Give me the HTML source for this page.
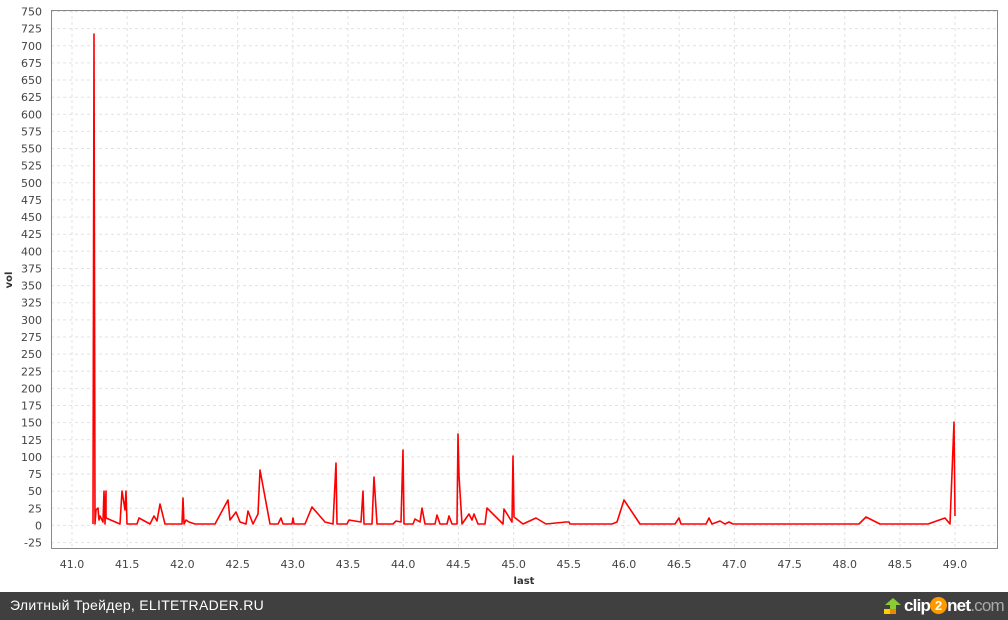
<!DOCTYPE html>
<html><head><meta charset="utf-8"><style>
html,body{margin:0;padding:0;width:1008px;height:620px;overflow:hidden;background:#fff;font-family:"Liberation Sans","DejaVu Sans",sans-serif}
#foot{position:absolute;left:0;top:592px;width:1008px;height:28px;background:#404040;color:#fff;font-size:14px}
</style></head><body>
<svg width="1008" height="592" style="position:absolute;left:0;top:0" font-family="DejaVu Sans, Liberation Sans, sans-serif" font-size="11" fill="#444">
<g stroke="#e2e2e2" stroke-dasharray="3,3" stroke-width="1">
<line x1="51" x2="998" y1="11.5" y2="11.5"/><line x1="51" x2="998" y1="28.6" y2="28.6"/><line x1="51" x2="998" y1="45.8" y2="45.8"/><line x1="51" x2="998" y1="62.9" y2="62.9"/><line x1="51" x2="998" y1="80.0" y2="80.0"/><line x1="51" x2="998" y1="97.2" y2="97.2"/><line x1="51" x2="998" y1="114.3" y2="114.3"/><line x1="51" x2="998" y1="131.4" y2="131.4"/><line x1="51" x2="998" y1="148.5" y2="148.5"/><line x1="51" x2="998" y1="165.7" y2="165.7"/><line x1="51" x2="998" y1="182.8" y2="182.8"/><line x1="51" x2="998" y1="199.9" y2="199.9"/><line x1="51" x2="998" y1="217.1" y2="217.1"/><line x1="51" x2="998" y1="234.2" y2="234.2"/><line x1="51" x2="998" y1="251.3" y2="251.3"/><line x1="51" x2="998" y1="268.5" y2="268.5"/><line x1="51" x2="998" y1="285.6" y2="285.6"/><line x1="51" x2="998" y1="302.7" y2="302.7"/><line x1="51" x2="998" y1="319.9" y2="319.9"/><line x1="51" x2="998" y1="337.0" y2="337.0"/><line x1="51" x2="998" y1="354.1" y2="354.1"/><line x1="51" x2="998" y1="371.3" y2="371.3"/><line x1="51" x2="998" y1="388.4" y2="388.4"/><line x1="51" x2="998" y1="405.5" y2="405.5"/><line x1="51" x2="998" y1="422.6" y2="422.6"/><line x1="51" x2="998" y1="439.8" y2="439.8"/><line x1="51" x2="998" y1="456.9" y2="456.9"/><line x1="51" x2="998" y1="474.0" y2="474.0"/><line x1="51" x2="998" y1="491.2" y2="491.2"/><line x1="51" x2="998" y1="508.3" y2="508.3"/><line x1="51" x2="998" y1="525.4" y2="525.4"/><line x1="51" x2="998" y1="542.6" y2="542.6"/>
<line y1="10" y2="549" x1="72" x2="72"/><line y1="10" y2="549" x1="127.2" x2="127.2"/><line y1="10" y2="549" x1="182.4" x2="182.4"/><line y1="10" y2="549" x1="237.6" x2="237.6"/><line y1="10" y2="549" x1="292.8" x2="292.8"/><line y1="10" y2="549" x1="348" x2="348"/><line y1="10" y2="549" x1="403.2" x2="403.2"/><line y1="10" y2="549" x1="458.4" x2="458.4"/><line y1="10" y2="549" x1="513.6" x2="513.6"/><line y1="10" y2="549" x1="568.8" x2="568.8"/><line y1="10" y2="549" x1="624" x2="624"/><line y1="10" y2="549" x1="679.2" x2="679.2"/><line y1="10" y2="549" x1="734.4" x2="734.4"/><line y1="10" y2="549" x1="789.6" x2="789.6"/><line y1="10" y2="549" x1="844.8" x2="844.8"/><line y1="10" y2="549" x1="900" x2="900"/><line y1="10" y2="549" x1="955" x2="955"/>
</g>
<rect x="51.5" y="10.5" width="946" height="538" fill="none" stroke="#888"/>
<g text-anchor="end">
<text x="42" y="15.5">750</text><text x="42" y="32.6">725</text><text x="42" y="49.8">700</text><text x="42" y="66.9">675</text><text x="42" y="84">650</text><text x="42" y="101.2">625</text><text x="42" y="118.3">600</text><text x="42" y="135.4">575</text><text x="42" y="152.5">550</text><text x="42" y="169.7">525</text><text x="42" y="186.8">500</text><text x="42" y="203.9">475</text><text x="42" y="221.1">450</text><text x="42" y="238.2">425</text><text x="42" y="255.3">400</text><text x="42" y="272.5">375</text><text x="42" y="289.6">350</text><text x="42" y="306.7">325</text><text x="42" y="323.9">300</text><text x="42" y="341">275</text><text x="42" y="358.1">250</text><text x="42" y="375.3">225</text><text x="42" y="392.4">200</text><text x="42" y="409.5">175</text><text x="42" y="426.6">150</text><text x="42" y="443.8">125</text><text x="42" y="460.9">100</text><text x="42" y="478">75</text><text x="42" y="495.2">50</text><text x="42" y="512.3">25</text><text x="42" y="529.4">0</text><text x="42" y="546.6">-25</text>
</g>
<g text-anchor="middle">
<text x="72" y="568">41.0</text><text x="127.2" y="568">41.5</text><text x="182.4" y="568">42.0</text><text x="237.6" y="568">42.5</text><text x="292.8" y="568">43.0</text><text x="348" y="568">43.5</text><text x="403.2" y="568">44.0</text><text x="458.4" y="568">44.5</text><text x="513.6" y="568">45.0</text><text x="568.8" y="568">45.5</text><text x="624" y="568">46.0</text><text x="679.2" y="568">46.5</text><text x="734.4" y="568">47.0</text><text x="789.6" y="568">47.5</text><text x="844.8" y="568">48.0</text><text x="900" y="568">48.5</text><text x="955" y="568">49.0</text>
<text x="524" y="584" font-weight="bold" font-size="10" fill="#333">last</text>
</g>
<text transform="translate(12,280) rotate(-90)" text-anchor="middle" font-weight="bold" font-size="10" fill="#333">vol</text>
<polyline fill="none" stroke="#f00" stroke-width="1.6" stroke-linejoin="round" points="93,524 94,34 95,524 96,510 98,508 99,520 100,516 103,522 104,491 105,524 106,491 106,518 120,524 122,491 125,510 126,491 127,524 137,524 139,518 150,524 154,516 157,521 160,504 165,524 182,524 183,498 184,524 186,520 189,522 195,524 215,524 228,500 230,520 236,512 240,522 246,524 248,511 253,524 258,514 260,470 270,524 278,524 281,518 283,524 292,524 293,518 294,524 305,524 312,507 325,522 333,524 336,463 337,524 347,524 349,520 361,522 363,491 364,524 372,524 374,477 377,524 393,524 396,521 401,522 403,450 404,524 413,524 415,519 420,522 422,508 425,524 435,524 437,515 440,524 447,524 449,516 452,524 457,524 458,434 459,476 462,524 469,514 472,520 474,514 478,524 485,524 487,508 503,524 504,509 512,522 513,456 514,517 523,524 536,518 546,524 566,522 569,522 570,524 612,524 617,522 624,500 640,524 675,524 679,518 681,524 706,524 709,518 712,524 720,521 725,524 729,522 733,524 859,524 866,517 880,524 928,524 945,518 950,524 954,422 955,516"/>
</svg>
<div id="foot">
<span style="position:absolute;left:10px;top:5px;letter-spacing:0.3px">Элитный Трейдер, ELITETRADER.RU</span>
<svg style="position:absolute;left:883px;top:6px" width="20" height="17"><polygon points="10,0 18,7 13,7 13,11 7,11 7,7 2,7" fill="#8c3"/><rect x="1" y="11" width="12" height="5" fill="#e80"/><rect x="1" y="11" width="6" height="5" fill="#fc0"/></svg>
<div style="position:absolute;left:904px;top:1px;width:104px;white-space:nowrap;font-size:17px;font-weight:bold;color:#fff;letter-spacing:-0.8px;line-height:26px">clip<span style="display:inline-block;background:#f90;border-radius:50%;width:17px;height:17px;line-height:17px;text-align:center;font-size:13px;letter-spacing:0;vertical-align:1px">2</span>net<span style="color:#aaa;font-weight:normal">.com</span></div>
</div>
</body></html>
